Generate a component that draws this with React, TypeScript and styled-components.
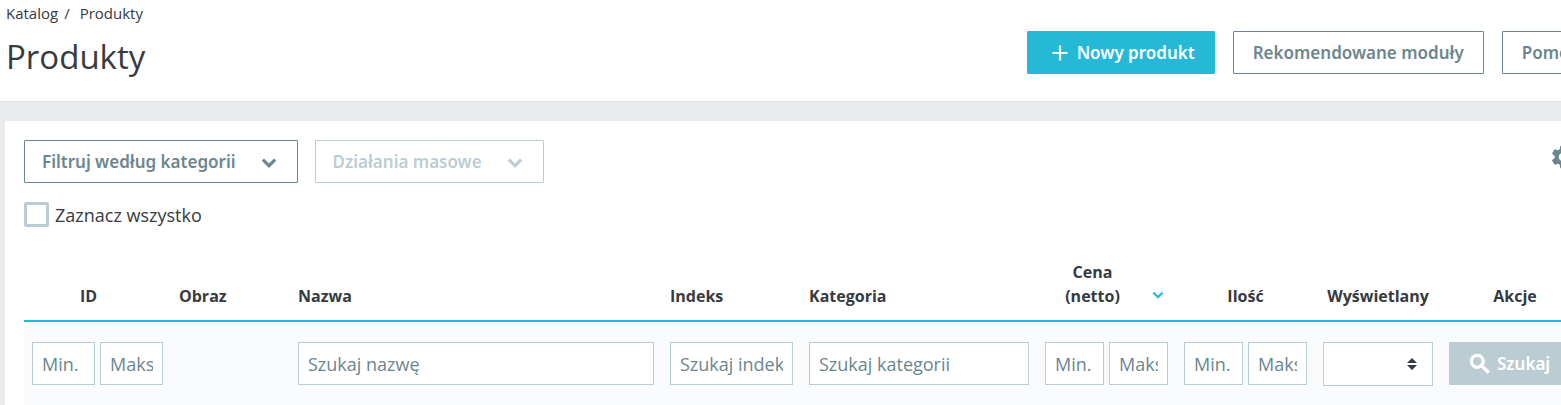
import React from "react";
import styled, { createGlobalStyle, css } from "styled-components";
import { MdAdd, MdKeyboardArrowDown, MdSearch, MdSettings } from "react-icons/md";

const color = {
  text: "#363a41",
  slate: "#6c868e",
  pale: "#bbcdd2",
  primary: "#25b9d7",
  line: "#dfdfdf",
  backdrop: "#eaebec",
  filterRow: "#fafbfc",
};

const GlobalStyle = createGlobalStyle`
  *, *::before, *::after { box-sizing: border-box; }
  body {
    margin: 0;
    background: ${color.backdrop};
    color: ${color.text};
    font: 400 18px/24px "Open Sans", sans-serif;
  }
  button, input, select { font: inherit; }
  svg path[fill="none"] { stroke: none; }
`;

const Viewport = styled.div`
  overflow: hidden;
`;

/* The admin content is slightly wider than the visible window. */
const Page = styled.div`
  width: calc(100% + 47px);
`;

const Header = styled.header`
  display: flex;
  justify-content: space-between;
  align-items: flex-start;
  padding: 4px 10px 20px 6px;
  background: #fff;
  border-bottom: 1px solid ${color.line};
`;

const Crumbs = styled.ol`
  display: flex;
  margin: 0;
  padding: 0;
  list-style: none;
  font-size: 15px;
  line-height: 18px;

  li + li::before {
    content: "/";
    padding: 0 10px 0 6px;
  }
  a {
    color: inherit;
    text-decoration: none;
  }
`;

const Title = styled.h1`
  margin: 11px 0 0;
  font-size: 33px;
  font-weight: 400;
  line-height: 48px;
`;

type Variant = "primary" | "outline" | "muted";

const variants = {
  primary: css`
    color: #fff;
    background: ${color.primary};
    border-color: ${color.primary};
  `,
  outline: css`
    color: ${color.slate};
    background: #fff;
    border-color: ${color.slate};
  `,
  muted: css`
    color: #fff;
    background: ${color.pale};
    border-color: ${color.pale};
  `,
};

const Button = styled.button<{ $variant: Variant }>`
  display: inline-flex;
  align-items: center;
  gap: 4px;
  height: 43px;
  padding: 0 17px;
  border: 1px solid;
  border-radius: 1px;
  font-family: "Noto Sans", "Open Sans", sans-serif;
  font-size: 17px;
  font-weight: 600;
  white-space: nowrap;
  cursor: pointer;
  ${(p) => variants[p.$variant]}
`;

const HeaderActions = styled.div`
  display: flex;
  gap: 18px;
  padding-top: 27px;

  ${Button} {
    padding: 0 19px;
  }
`;

const SearchButton = styled(Button)`
  svg {
    stroke: currentColor;
    stroke-width: 1;
  }
`;

const DropdownButton = styled(Button)`
  gap: 20px;
  padding-right: 15px;

  svg {
    margin-top: 2px;
    stroke: currentColor;
    stroke-width: 1;
  }
  &:disabled {
    color: ${color.pale};
    border-color: ${color.pale};
    cursor: default;
  }
`;

const Card = styled.main`
  margin: 19px 0 0 5px;
  padding: 19px 19px 0;
  background: #fff;
`;

const Toolbar = styled.div`
  display: flex;
  gap: 17px;
`;

const SettingsButton = styled.button`
  display: flex;
  align-items: center;
  align-self: flex-start;
  height: 34px;
  margin-left: auto;
  padding: 0 12px;
  border: 0;
  background: none;
  color: ${color.slate};
`;

const SelectAll = styled.label`
  display: flex;
  align-items: center;
  gap: 6px;
  width: max-content;
  margin-top: 19px;
`;

const Checkbox = styled.input`
  appearance: none;
  width: 25px;
  height: 25px;
  margin: 0;
  border: 3px solid ${color.pale};
  border-radius: 2px;
  background: #fff;

  &:checked {
    background: ${color.primary};
  }
`;

const Table = styled.table`
  width: 100%;
  margin-top: 25px;
  table-layout: fixed;
  border-collapse: separate;
  border-spacing: 0;
`;

const Col = styled.col<{ $width?: number }>`
  width: ${(p) => (p.$width ? `${p.$width}px` : "auto")};
`;

const Th = styled.th<{ $align?: "left" | "center"; $reserve?: boolean }>`
  padding: 8px 8px 12px;
  ${(p) => p.$reserve && "padding-right: 26px;"}
  border-bottom: 2px solid ${color.primary};
  font-size: 16px;
  font-weight: 700;
  text-align: ${(p) => p.$align ?? "center"};
  vertical-align: bottom;
`;

const SortLabel = styled.div`
  display: flex;
  align-items: flex-end;
  gap: 8px;

  span {
    flex: 1;
  }
  svg {
    margin-bottom: 3px;
    color: ${color.primary};
    stroke: currentColor;
    stroke-width: 1;
  }
`;

const Td = styled.td`
  padding: 20px 8px 19px;
  background: ${color.filterRow};
  vertical-align: top;
`;

const Range = styled.div`
  display: flex;
  gap: 5px;
`;

const Field = styled.input`
  display: block;
  width: 100%;
  min-width: 0;
  height: 43px;
  padding: 0 9px;
  border: 1px solid ${color.pale};
  border-radius: 0;
  background: #fff;
  color: ${color.text};

  &::placeholder {
    color: ${color.slate};
    opacity: 1;
  }
`;

const SelectWrap = styled.div`
  display: grid;
  align-items: center;

  > * {
    grid-area: 1 / 1;
  }
  svg {
    justify-self: end;
    margin-right: 16px;
    pointer-events: none;
  }
`;

const Select = styled.select`
  appearance: none;
  width: 100%;
  height: 44px;
  padding: 0 32px 0 9px;
  border: 1px solid ${color.pale};
  border-radius: 0;
  background: #fff;
  color: ${color.text};
`;

function MinMax({ name }: { name: string }) {
  return (
    <Range>
      <Field placeholder="Min." aria-label={`${name} min.`} />
      <Field placeholder="Maks." aria-label={`${name} maks.`} />
    </Range>
  );
}

export default function App() {
  return (
    <Viewport>
      <GlobalStyle />
      <Page>
        <Header>
          <div>
            <nav>
              <Crumbs>
                <li>
                  <a href="#katalog">Katalog</a>
                </li>
                <li>
                  <a href="#produkty">Produkty</a>
                </li>
              </Crumbs>
            </nav>
            <Title>Produkty</Title>
          </div>
          <HeaderActions>
            <Button $variant="primary">
              <MdAdd size={26} />
              Nowy produkt
            </Button>
            <Button $variant="outline">Rekomendowane moduły</Button>
            <Button $variant="outline">Pomoc</Button>
          </HeaderActions>
        </Header>

        <Card>
          <Toolbar>
            <DropdownButton $variant="outline">
              Filtruj według kategorii
              <MdKeyboardArrowDown size={26} />
            </DropdownButton>
            <DropdownButton $variant="outline" disabled>
              Działania masowe
              <MdKeyboardArrowDown size={26} />
            </DropdownButton>
            <SettingsButton aria-label="Ustawienia">
              <MdSettings size={28} />
            </SettingsButton>
          </Toolbar>

          <SelectAll>
            <Checkbox type="checkbox" />
            Zaznacz wszystko
          </SelectAll>

          <Table>
            <colgroup>
              <Col $width={147} />
              <Col $width={119} />
              <Col />
              <Col $width={139} />
              <Col $width={236} />
              <Col $width={139} />
              <Col $width={139} />
              <Col $width={126} />
              <Col $width={148} />
            </colgroup>
            <thead>
              <tr>
                <Th $reserve>ID</Th>
                <Th $align="left">Obraz</Th>
                <Th $align="left">Nazwa</Th>
                <Th $align="left">Indeks</Th>
                <Th $align="left">Kategoria</Th>
                <Th>
                  <SortLabel>
                    <span>
                      Cena
                      <br />
                      (netto)
                    </span>
                    <MdKeyboardArrowDown size={20} />
                  </SortLabel>
                </Th>
                <Th>Ilość</Th>
                <Th>Wyświetlany</Th>
                <Th>Akcje</Th>
              </tr>
            </thead>
            <tbody>
              <tr>
                <Td>
                  <MinMax name="ID" />
                </Td>
                <Td />
                <Td>
                  <Field placeholder="Szukaj nazwę" aria-label="Nazwa" />
                </Td>
                <Td>
                  <Field placeholder="Szukaj indeksu" aria-label="Indeks" />
                </Td>
                <Td>
                  <Field placeholder="Szukaj kategorii" aria-label="Kategoria" />
                </Td>
                <Td>
                  <MinMax name="Cena" />
                </Td>
                <Td>
                  <MinMax name="Ilość" />
                </Td>
                <Td>
                  <SelectWrap>
                    <Select aria-label="Wyświetlany" defaultValue="">
                      <option value="" />
                      <option value="1">Aktywny</option>
                      <option value="0">Nieaktywny</option>
                    </Select>
                    <svg width="10" height="12" viewBox="0 0 10 12" fill={color.text} aria-hidden="true">
                      <path d="M5 0l5 5H0zM5 12L0 7h10z" />
                    </svg>
                  </SelectWrap>
                </Td>
                <Td>
                  <SearchButton $variant="muted" disabled>
                    <MdSearch size={26} />
                    Szukaj
                  </SearchButton>
                </Td>
              </tr>
            </tbody>
          </Table>
        </Card>
      </Page>
    </Viewport>
  );
}
